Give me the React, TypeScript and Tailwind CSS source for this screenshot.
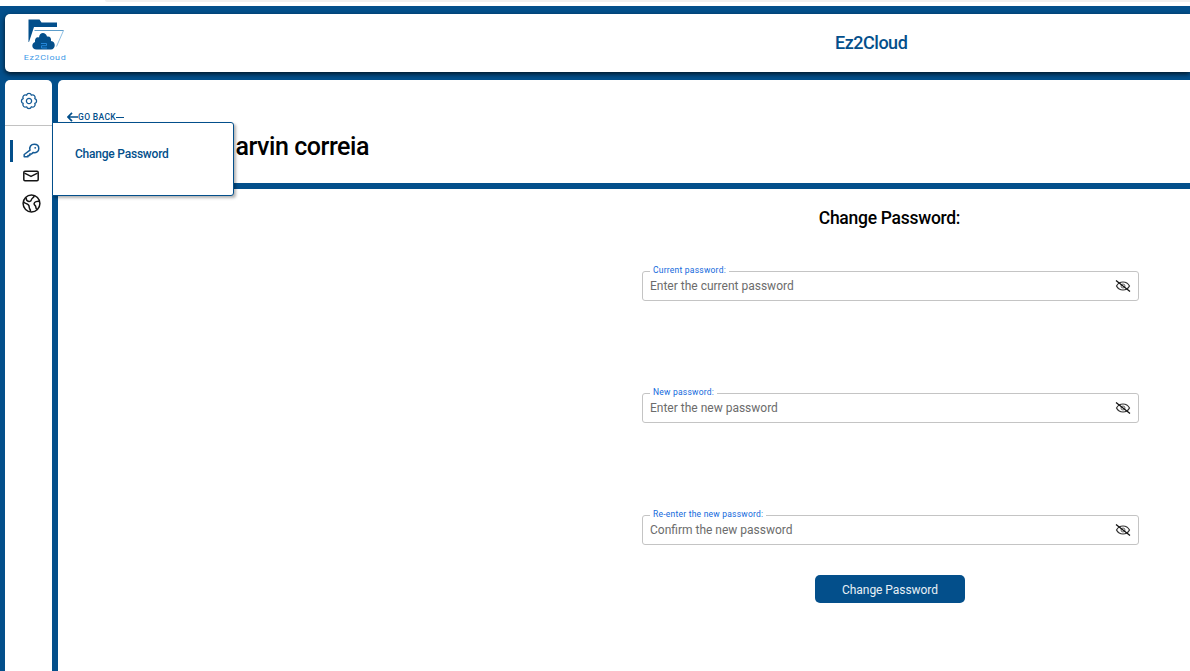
import React from "react";

function Logo() {
  return (
    <div className="flex w-[46px] flex-col items-center">
      <svg className="ml-[2px]" width="38" height="33" viewBox="0 0 38 33" fill="none">
        <path d="M1.500 .5h11l2 3h15.500v4.500H7L2 23H1.500z" fill="#034f8b" />
        <path d="M36.500 11.500l-7 16" stroke="#8ec0e4" strokeWidth="1" />
        <path d="M7.500 11.500h29" stroke="#5d9dca" strokeWidth="1" />
        <path
          d="M9.500 30.500c-5 0-5.500-6-1.500-7.500-.5-4 2-5.500 4-4.500C12.500 12.500 19 13 20 17.500c3-.5 4.500 1.500 4 4.500C29.500 22.500 28.500 30.500 24 30.500z"
          fill="#034f8b"
        />
        <path d="M14 24.500h5.500v2.200H14.500v2.300H20" stroke="#2386d8" strokeWidth="1" />
      </svg>
      <span className="mt-[1px] inline-block scale-x-[1.12] text-[8px] leading-[9px] tracking-[0.550px] text-[#3d9ae8]">Ez2Cloud</span>
    </div>
  );
}

function GearIcon() {
  return (
    <svg width="18" height="18" viewBox="-9 -9 18 18" fill="none" stroke="#155b96" strokeWidth="1.300" strokeLinejoin="round">
      <path d="M5.800 -2.400A2.500 2.500 0 0 1 5.800 2.400A2.500 2.500 0 0 1 2.400 5.800A2.500 2.500 0 0 1 -2.400 5.800A2.500 2.500 0 0 1 -5.800 2.400A2.500 2.500 0 0 1 -5.800 -2.400A2.500 2.500 0 0 1 -2.400 -5.800A2.500 2.500 0 0 1 2.400 -5.800A2.500 2.500 0 0 1 5.800 -2.400z" />
      <circle r="2.600" />
    </svg>
  );
}

function KeyIcon() {
  return (
    <svg className="ml-[10px]" width="17" height="16" viewBox="0 0 17 16" fill="none" stroke="#155b96" strokeWidth="1.500" strokeLinejoin="round">
      <path d="M7 7.200C6 4 8 1.200 11.200 1.200c3 0 4.600 1.800 4.600 4.200 0 3-2.600 5-5.800 4.200L8.600 11H6.800v1.600H5v1.200H1.200v-2.300z" />
      <circle cx="12.200" cy="4.800" r=".9" fill="#155b96" stroke="none" />
    </svg>
  );
}

function MailIcon() {
  return (
    <svg className="ml-[18px] mt-[8px]" width="16" height="12" viewBox="0 0 16 12" fill="none" stroke="#151515" strokeWidth="1.500" strokeLinejoin="round">
      <rect x=".8" y="1.200" width="14.400" height="9.600" rx="1.200" />
      <path d="M1.500 3.200L8 6.400l6.500-3.200" />
    </svg>
  );
}

function GlobeIcon() {
  return (
    <svg className="ml-[17px] mt-[12px]" width="19" height="19" viewBox="0 0 19 19" fill="none" stroke="#151515" strokeWidth="1.500" strokeLinejoin="round">
      <circle cx="9.500" cy="9.500" r="8.400" />
      <path d="M4 3.500c0 2.500 1.200 3.700 3 4 1.800.2 2.200-.6 2.400-1.800.2-1.400 2.400-1.600 2.900-4.200" />
      <path d="M1.300 8c1.200 1.500 3.800 1.300 5.200 3 1.200 1.500.2 2.600 1.300 4 .6.800.7 1.500.7 2.500" />
      <path d="M17.600 7.400c-2.300-.4-5.200.2-5.500 2.200-.2 1.800 1.800 1.800 1.700 3.400 0 1.200.5 2 1.200 2.500" />
    </svg>
  );
}

function EyeOff() {
  return (
    <svg width="16" height="12" viewBox="0 0 16 12" fill="none" stroke="#333">
      <path d="M1.500 6C3 3.200 5.200 2 8 2s5 1.200 6.500 4c-1.500 2.800-3.700 4-6.500 4S3 8.800 1.500 6z" strokeWidth="1.200" />
      <circle cx="8" cy="6" r="2" strokeWidth="1" stroke="#666" />
      <path d="M1 .5l14 11" strokeWidth="1.300" stroke="#111" />
    </svg>
  );
}

type FieldProps = { label: string; placeholder: string };

function Field({ label, placeholder }: FieldProps) {
  return (
    <div className="relative flex h-[30px] w-[497px] items-center justify-between rounded-[3px] border border-[#c4c4c4] pl-[7px] pr-[7px]">
      <label className="absolute left-[7px] top-[-8px] bg-white px-[3px] text-[8.500px] leading-[12px] tracking-[0.230px] text-[#1269dc]">
        {label}
      </label>
      <span className="text-[12px] leading-[16px] text-[#6c6c6c]">{placeholder}</span>
      <EyeOff />
    </div>
  );
}

export default function App() {
  return (
    <div className="flex h-[671px] w-[1190px] flex-col overflow-hidden bg-[#034f8b] font-['Roboto',sans-serif]">
      <div className="h-[6px] shrink-0 bg-white">
        <div className="ml-[105px] h-[2px] rounded-bl-full bg-[#f0f0f0]" />
      </div>

      <header className="ml-[5px] mt-[8px] flex h-[58px] shrink-0 rounded-l-[5px] bg-white shadow-[0_2px_5px_rgba(0,0,0,0.750)]">
        <div className="ml-[17px] mt-[5px]">
          <Logo />
        </div>
        <h1 className="ml-[767px] mt-[17px] text-[18px] font-medium leading-[24px] tracking-[-0.480px] text-[#034f8b]">
          Ez2Cloud
        </h1>
      </header>

      <div className="mt-[8px] flex min-h-0 flex-1 gap-[6px] pl-[5px]">
        <nav className="flex w-[47px] shrink-0 flex-col rounded-t-[5px] bg-white">
          <div className="flex h-[46px] items-center justify-center border-b border-[#c2c2c2] pb-[3px]">
            <GearIcon />
          </div>
          <div className="mt-[14px] flex h-[22px] items-center">
            <div className="ml-[5px] h-[22px] w-[3px] bg-[#034f8b]" />
            <KeyIcon />
          </div>
          <MailIcon />
          <GlobeIcon />
        </nav>

        <main className="relative flex flex-1 flex-col rounded-tl-[5px] bg-white">
          <section className="h-[109px] shrink-0 border-b-[6px] border-[#034f8b]">
            <div className="ml-[9px] flex items-center pt-[32px] text-[8.500px] font-medium text-[#034f8b]">
              <svg width="11" height="10" viewBox="0 0 11 10" fill="none" stroke="#034f8b" strokeWidth="1.700">
                <path d="M5 .8L1 5l4 4.200M1 5h10" />
              </svg>
              <span className="leading-[10px] tracking-[0.350px]">GO BACK</span>
              <span className="h-px w-[8px] bg-[#034f8b]" />
            </div>
            <h2 className="ml-[153px] mt-[9px] text-[25px] font-medium leading-[32px] tracking-[-0.450px] text-black">
              <span className="mr-[3px]">M</span>arvin correia
            </h2>
          </section>
          <section className="flex flex-col pl-[584px]">
            <h3 className="mt-[17px] w-[495px] text-center text-[17.500px] font-medium leading-[24px] tracking-[-0.280px] text-black">
              Change Password:
            </h3>
            <form className="mt-[41px] flex flex-col gap-[92px]">
              <Field label="Current password:" placeholder="Enter the current password" />
              <Field label="New password:" placeholder="Enter the new password" />
              <Field label="Re-enter the new password:" placeholder="Confirm the new password" />
            </form>
            <button className="ml-[173px] mt-[30px] h-[28px] w-[150px] rounded-[5px] bg-[#034f8b] pt-[1px] text-[12px] tracking-[-0.050px] text-[#e8f0f6]">
              Change Password
            </button>
          </section>
          <div className="absolute left-[-6px] top-[42px] flex h-[74px] w-[182px] items-start rounded-r-[3px] border border-[#034f8b] bg-white pl-[22px] pt-[23px] shadow-[2px_2px_3px_rgba(0,0,0,0.300)]">
            <span className="text-[12px] font-medium leading-[16px] tracking-[-0.220px] text-[#034f8b]">Change Password</span>
          </div>
        </main>
      </div>
    </div>
  );
}
